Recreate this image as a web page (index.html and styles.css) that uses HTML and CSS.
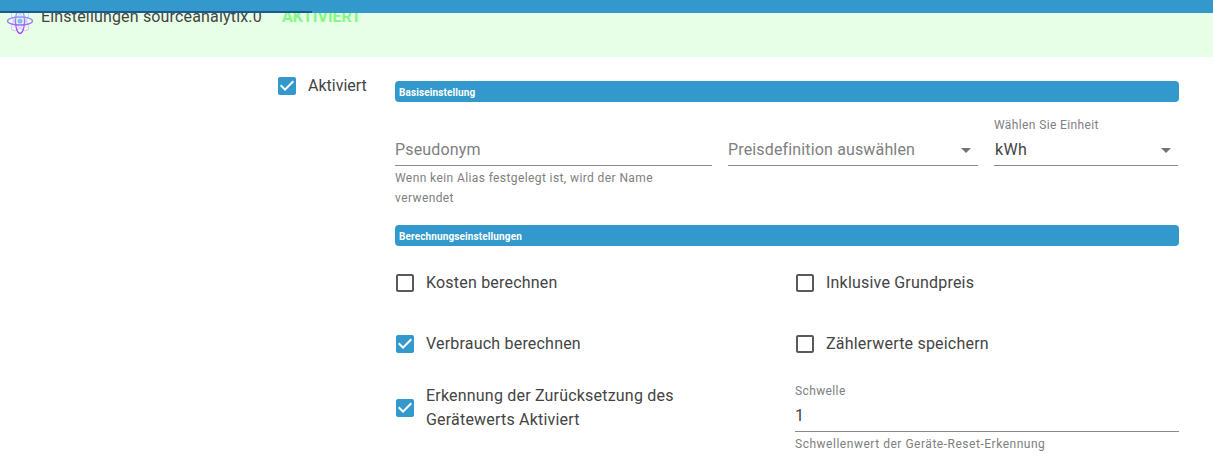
FILE: index.html
```html
<!DOCTYPE html>
<html lang="de">
<head>
<meta charset="utf-8">
<title>Einstellungen sourceanalytix.0</title>
<link rel="stylesheet" href="styles.css">
</head>
<body>
<svg class="defs" width="0" height="0" aria-hidden="true">
  <symbol id="on" viewBox="0 0 24 24"><path d="M19 3H5c-1.11 0-2 .9-2 2v14c0 1.1.89 2 2 2h14c1.11 0 2-.9 2-2V5c0-1.1-.89-2-2-2zm-9 14l-5-5 1.41-1.41L10 14.17l7.59-7.59L19 8l-9 9z"/></symbol>
  <symbol id="off" viewBox="0 0 24 24"><path d="M19 5v14H5V5h14m0-2H5c-1.1 0-2 .9-2 2v14c0 1.1.9 2 2 2h14c1.1 0 2-.9 2-2V5c0-1.1-.9-2-2-2z"/></symbol>
</svg>
<header class="head">
  <div class="topbar"><div class="progress"></div></div>
  <svg class="logo" width="28" height="28" viewBox="0 0 28 28" fill="none">
    <defs>
      <linearGradient id="atom" gradientUnits="userSpaceOnUse" x1="14" y1="2" x2="14" y2="27">
        <stop offset="0" stop-color="#7fc4ff"/>
        <stop offset="1" stop-color="#b62cff"/>
      </linearGradient>
    </defs>
    <ellipse cx="14" cy="14" rx="12" ry="5" transform="rotate(50 14 14)" stroke="#d9c8ff" stroke-width="1"/>
    <ellipse cx="14" cy="14" rx="12" ry="5" transform="rotate(-50 14 14)" stroke="#d9c8ff" stroke-width="1"/>
    <ellipse cx="14" cy="14" rx="12.5" ry="4" stroke="url(#atom)" stroke-width="1.3"/>
    <ellipse cx="14" cy="14" rx="4.5" ry="12.5" stroke="url(#atom)" stroke-width="1.3"/>
    <circle cx="14" cy="14" r="2.6" fill="#8fb4ff"/>
  </svg>
  <span class="title">Einstellungen sourceanalytix.0</span>
  <span class="status">AKTIVIERT</span>
</header>
<main class="main">
  <label class="check enable">
    <svg class="box"><use href="#on"/></svg>
    <span>Aktiviert</span>
  </label>
  <div class="form">
    <div class="section">Basiseinstellung</div>
    <div class="fields">
      <div class="field alias">
        <div class="caption"></div>
        <div class="control muted">Pseudonym</div>
        <div class="help">Wenn kein Alias festgelegt ist, wird der Name verwendet</div>
      </div>
      <div class="field price">
        <div class="caption"></div>
        <div class="control muted">Preisdefinition auswählen<i class="caret"></i></div>
      </div>
      <div class="field unit">
        <div class="caption">Wählen Sie Einheit</div>
        <div class="control">kWh<i class="caret"></i></div>
      </div>
    </div>
    <div class="section second">Berechnungseinstellungen</div>
    <div class="options">
      <label class="check"><svg class="box off"><use href="#off"/></svg><span>Kosten berechnen</span></label>
      <label class="check"><svg class="box off"><use href="#off"/></svg><span>Inklusive Grundpreis</span></label>
      <label class="check"><svg class="box"><use href="#on"/></svg><span>Verbrauch berechnen</span></label>
      <label class="check"><svg class="box off"><use href="#off"/></svg><span>Zählerwerte speichern</span></label>
      <label class="check reset"><svg class="box"><use href="#on"/></svg><span>Erkennung der Zurücksetzung des Gerätewerts Aktiviert</span></label>
      <div class="field threshold">
        <div class="caption">Schwelle</div>
        <div class="control">1</div>
        <div class="help">Schwellenwert der Geräte-Reset-Erkennung</div>
      </div>
    </div>
  </div>
</main>
</body>
</html>
```
FILE: styles.css
```css
* { box-sizing: border-box; }
html, body { margin: 0; height: 465px; overflow: hidden; }
body { background: #fff; font-family: Roboto, "Liberation Sans", sans-serif; color: #444; }
.defs { position: absolute; }

.head { position: relative; height: 57px; background: #e6ffe6; display: flex; align-items: flex-start; overflow: hidden; padding: 9px 0 0 6px; }
.topbar { position: absolute; left: 0; top: 0; right: 0; height: 13px; background: #3399cc; z-index: 1; }
.progress { width: 312px; height: 13px; border-bottom: 2px solid #1a5a8c; }
.logo { flex: none; margin-top: -2px; }
.title { font-size: 16px; line-height: 16px; margin-left: 7px; letter-spacing: .17px; color: #444; }
.status { font-size: 16px; line-height: 16px; font-weight: 700; color: #84f984; margin-left: 20px; }

.main { display: flex; align-items: flex-start; padding: 24px 0 0 275px; }
.check { display: flex; align-items: center; gap: 8px; font-size: 16px; line-height: 24px; letter-spacing: .2px; color: #444; }
.box { flex: none; width: 24px; height: 24px; fill: #3399cc; }
.box.off { fill: #5a5a5a; }
.enable { width: 120px; margin-top: -7px; letter-spacing: 0; }
.enable span { margin-left: 1px; }

.form { width: 784px; }
.section { height: 21px; border-radius: 4px; background: #3399cc; color: #fff; font-size: 10px; font-weight: 700; line-height: 23px; padding-left: 4px; letter-spacing: .12px; }
.second { margin-top: 17px; }

.fields { display: flex; gap: 16px; margin-top: 15px; }
.alias { width: 317px; }
.price { width: 250px; }
.unit { width: 184px; }
.caption { height: 16px; font-size: 12px; line-height: 16px; letter-spacing: .38px; color: #808080; }
.control { position: relative; height: 33px; border-bottom: 1px solid #8a8a8a; font-size: 16px; line-height: 33px; letter-spacing: .15px; }
.muted { color: #808080; }
.unit .control { padding-left: 1px; letter-spacing: .4px; }
.caret { position: absolute; right: 7px; top: 15px; border: 5px solid transparent; border-top-color: #757575; border-bottom-width: 0; }
.help { font-size: 12px; line-height: 20px; letter-spacing: .4px; color: #808080; margin-top: 2px; }

.options { display: grid; grid-template-columns: 400px 384px; grid-template-rows: 61px 56px auto; padding-top: 22px; }
.options .check { align-self: start; padding-top: 3px; margin-left: -2px; gap: 9px; }
.options .reset { padding-top: 0; margin-top: -1px; width: 300px; }
.threshold .caption { margin-top: -2px; }
.threshold .help { letter-spacing: .52px; }
```
